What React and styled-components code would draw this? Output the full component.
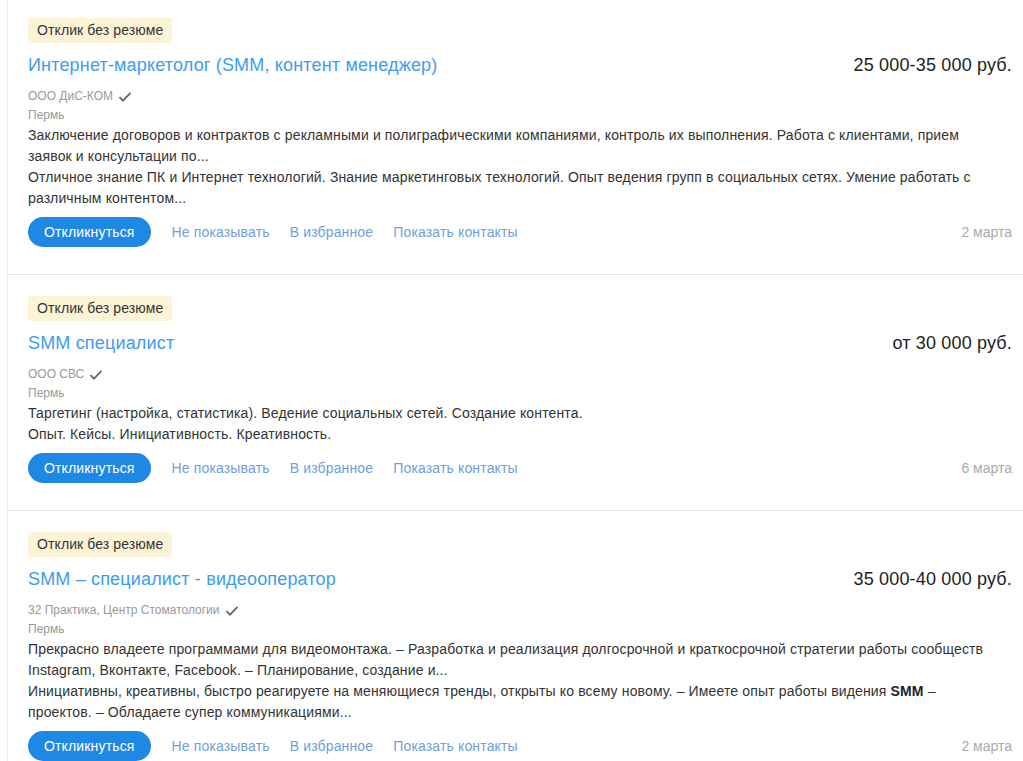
import styled, { createGlobalStyle } from 'styled-components';

const GlobalStyle = createGlobalStyle`
  body {
    margin: 0;
    background: #fff;
    font-family: "Liberation Sans", Arial, sans-serif;
    color: #333;
  }
`;

const List = styled.div`
  margin-left: 7px;
  margin-top: -3px;
  border-left: 1px solid #e8e8e8;
`;

const Card = styled.div`
  padding: 21px 11px 27px 20px;
  border-bottom: 1px solid #e6e6e6;
`;

const Tag = styled.span`
  display: inline-block;
  background: #fdf3d6;
  color: #333;
  font-size: 14px;
  line-height: 17px;
  padding: 4px 9px;
  border-radius: 3px;
  letter-spacing: 0.1px;
`;

const TitleRow = styled.div`
  display: flex;
  justify-content: space-between;
  align-items: baseline;
  margin-top: 10px;
  line-height: 24px;
`;

const Title = styled.a`
  font-size: 18px;
  letter-spacing: 0.17px;
  color: #3d9cf2;
  text-decoration: none;
`;

const Salary = styled.div`
  font-size: 18px;
  letter-spacing: 0.17px;
  color: #222;
`;

const Company = styled.div`
  display: flex;
  align-items: center;
  gap: 5px;
  margin-top: 10px;
  font-size: 12px;
  line-height: 19px;
  color: #999;
`;

const City = styled.div`
  font-size: 12px;
  line-height: 19px;
  color: #999;
`;

const Description = styled.div`
  padding-right: 22px;
`;

const Text = styled.p`
  margin: 0;
  font-size: 14px;
  line-height: 21px;
  letter-spacing: 0.14px;
  color: #333;

  b {
    color: #222;
  }
`;

const Actions = styled.div`
  display: flex;
  align-items: center;
  gap: 20px;
  margin-top: 8px;
`;

const RespondButton = styled.button`
  height: 30px;
  padding: 0 16px;
  margin-right: 1px;
  border: none;
  border-radius: 15px;
  background: #1f88e5;
  color: #fff;
  font-family: inherit;
  font-size: 14px;
  letter-spacing: 0.15px;
  cursor: pointer;
`;

const ActionLink = styled.a`
  font-size: 14px;
  letter-spacing: 0.15px;
  color: #6d9fdc;
  text-decoration: none;
  cursor: pointer;
`;

const Date = styled.span`
  margin-left: auto;
  font-size: 14px;
  color: #aaa;
`;

const Check = () => (
  <svg width="14" height="12" viewBox="0 0 14 12">
    <path d="M1.5 6.2 L5 9.6 L12.5 1.8" fill="none" stroke="#666" strokeWidth="1.8" />
  </svg>
);

const vacancies = [
  {
    title: 'Интернет-маркетолог (SMM, контент менеджер)',
    salary: '25 000-35 000 руб.',
    company: 'ООО ДиС-КОМ',
    date: '2 марта',
    text: [
      'Заключение договоров и контрактов с рекламными и полиграфическими компаниями, контроль их выполнения. Работа с клиентами, прием заявок и консультации по...',
      'Отличное знание ПК и Интернет технологий. Знание маркетинговых технологий. Опыт ведения групп в социальных сетях. Умение работать с различным контентом...',
    ],
  },
  {
    title: 'SMM специалист',
    salary: 'от 30 000 руб.',
    company: 'ООО СВС',
    date: '6 марта',
    text: [
      'Таргетинг (настройка, статистика). Ведение социальных сетей. Создание контента.',
      'Опыт. Кейсы. Инициативность. Креативность.',
    ],
  },
  {
    title: 'SMM – специалист - видеооператор',
    salary: '35 000-40 000 руб.',
    company: '32 Практика, Центр Стоматологии',
    date: '2 марта',
    text: [
      'Прекрасно владеете программами для видеомонтажа. – Разработка и реализация долгосрочной и краткосрочной стратегии работы сообществ Instagram, Вконтакте, Facebook. – Планирование, создание и...',
      <>
        Инициативны, креативны, быстро реагируете на меняющиеся тренды, открыты ко всему новому. – Имеете опыт работы видения <b>SMM</b> – проектов. – Обладаете супер коммуникациями...
      </>,
    ],
  },
];

const App = () => (
  <>
    <GlobalStyle />
    <List>
      {vacancies.map((v, i) => (
        <Card key={i}>
          <Tag>Отклик без резюме</Tag>
          <TitleRow>
            <Title href="#">{v.title}</Title>
            <Salary>{v.salary}</Salary>
          </TitleRow>
          <Company>
            {v.company}
            <Check />
          </Company>
          <City>Пермь</City>
          <Description>
            {v.text.map((t, j) => (
              <Text key={j}>{t}</Text>
            ))}
          </Description>
          <Actions>
            <RespondButton>Откликнуться</RespondButton>
            <ActionLink>Не показывать</ActionLink>
            <ActionLink>В избранное</ActionLink>
            <ActionLink>Показать контакты</ActionLink>
            <Date>{v.date}</Date>
          </Actions>
        </Card>
      ))}
    </List>
  </>
);

export default App;
